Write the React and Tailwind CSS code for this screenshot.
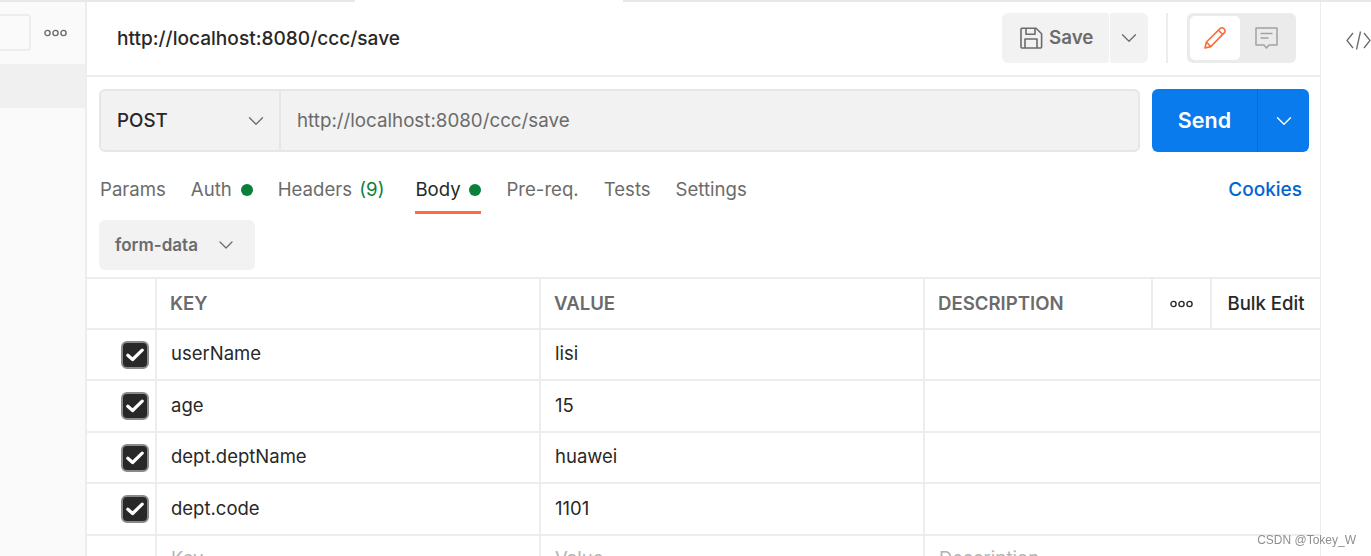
import { ChevronDown } from "lucide-react";

const rows = [
  ["userName", "lisi"],
  ["age", "15"],
  ["dept.deptName", "huawei"],
  ["dept.code", "1101"],
];

function Dots({ className }) {
  return (
    <svg width="23" height="8" viewBox="0 0 23 8" fill="none" stroke="currentColor" strokeWidth="1.4" className={className}>
      <circle cx="3.5" cy="4" r="2.6" />
      <circle cx="11.5" cy="4" r="2.6" />
      <circle cx="19.5" cy="4" r="2.6" />
    </svg>
  );
}

function GreenDot() {
  return <span className="inline-block w-3 h-3 rounded-full bg-[#0a7f3a]" />;
}

function Row({ children, check, className }) {
  return (
    <div className={`flex border-b-2 border-[#ededed] ${className}`}>
      <div className="w-[70px] shrink-0 border-r-2 border-[#ededed] flex items-center justify-end pr-[6px]">{check}</div>
      {children}
    </div>
  );
}

function Checkbox() {
  return (
    <span className="w-[28px] h-[28px] rounded-[6px] bg-[#282828] border-2 border-[#8a8a8a] flex items-center justify-center">
      <svg width="18" height="14" viewBox="0 0 18 14" fill="none" stroke="#fff" strokeWidth="3.2" strokeLinecap="round" strokeLinejoin="round">
        <path d="M1.8 7.2 L6.6 11.5 L16.2 2.2" />
      </svg>
    </span>
  );
}

export default function App() {
  return (
    <div className="w-[1371px] h-[556px] overflow-hidden bg-white font-['Inter',sans-serif] text-[#282828]">
      <div className="flex h-[2px]">
        <div className="w-[355px] bg-[#e8e8e8]" />
        <div className="w-[268px]" />
        <div className="flex-1 bg-[#e8e8e8]" />
      </div>
      <div className="flex h-[554px]">
        <aside className="w-[85px] shrink-0 bg-[#fafafa]">
          <div className="h-[62px] flex items-start pt-[12px]">
            <div className="w-[31px] h-[37px] border-2 border-l-0 border-[#ededed] rounded-r-[4px] bg-[#fafafa]" />
            <Dots className="ml-[13px] mt-[15px] text-[#6b6b6b]" />
          </div>
          <div className="h-[44px] bg-[#f0f0f0]" />
        </aside>

        <main className="w-[1236px] shrink-0 border-x-2 border-[#ededed] border-r-[1px]">
          <header className="h-[75px] border-b-2 border-[#ededed] flex items-center pl-[30px] pr-[24px]">
            <h1 className="text-[19.1px] font-medium -mt-[1px]">http://localhost:8080/ccc/save</h1>
            <div className="ml-auto flex items-center -mt-[2px]">
              <button className="w-[107px] h-[50px] bg-[#f2f2f2] rounded-l-[6px] rounded-r-[3px] flex items-center pl-[17px] gap-[6px] text-[18.75px] font-semibold text-[#6b6b6b]">
                <svg width="24" height="24" viewBox="0 0 24 24" fill="none" stroke="#6b6b6b" strokeWidth="1.6" strokeLinejoin="round">
                  <path d="M2 3.2 a1 1 0 0 1 1-1 H17 L22.6 7.8 V21 a1 1 0 0 1-1 1 H3 a1 1 0 0 1-1-1 Z" />
                  <path d="M7 2.2 V8.2 H16 V2.2" />
                  <path d="M6 22 V13 H18 V22" />
                </svg>
                <span className="pt-[1px]">Save</span>
              </button>
              <button className="w-[38px] h-[50px] ml-[1px] bg-[#f2f2f2] rounded-r-[6px] rounded-l-[3px] flex items-center justify-center">
                <ChevronDown size={26} strokeWidth={1.2} className="text-[#6b6b6b]" />
              </button>
              <div className="w-[2px] h-[50px] bg-[#ededed] ml-[18px] mr-[19px]" />
              <div className="w-[109px] h-[50px] bg-[#ebebeb] rounded-[6px] flex items-center pl-[3px]">
                <div className="w-[50px] h-[44px] bg-white rounded-[5px] flex items-center justify-center">
                  <svg width="24" height="24" viewBox="0 0 24 24" fill="none" stroke="#ff6c37" strokeWidth="1.6" strokeLinejoin="round">
                    <path d="M2 22 L3.4 16 L17.2 2.4 a2.4 2.4 0 0 1 3.4 0 l0.8 0.8 a2.4 2.4 0 0 1 0 3.4 L7.8 20.6 Z" />
                    <path d="M15.4 4.2 L19.6 8.4" />
                    <path d="M3.4 16 L7.8 20.6" />
                  </svg>
                </div>
                <div className="w-[53px] flex items-center justify-center pr-[2px]">
                  <svg width="24" height="24" viewBox="0 0 24 24" fill="none" stroke="#a3a3a3" strokeWidth="1.5" strokeLinejoin="round">
                    <path d="M2 2 H23 V19 H15 L12.5 22 L10 19 H2 Z" />
                    <path d="M6.5 7.5 H18.5 M6.5 12 H14.5" />
                  </svg>
                </div>
              </div>
            </div>
          </header>

          <div className="flex items-stretch h-[63px] mt-[12px] pl-[12px] pr-[11px]">
            <div className="flex flex-1 bg-[#f2f2f2] border-2 border-[#e6e6e6] rounded-[6px]">
              <div className="w-[180px] shrink-0 border-r-2 border-[#e6e6e6] flex items-center justify-between pl-[16px] pr-[10px] text-[18.75px] font-medium">
                <span className="pt-[1px]">POST</span>
                <ChevronDown size={26} strokeWidth={1.2} className="text-[#6b6b6b]" />
              </div>
              <div className="flex items-center pl-[16px] pt-[1px] text-[18.75px] text-[#6b6b6b]">http://localhost:8080/ccc/save</div>
            </div>
            <div className="ml-[12px] w-[157px] bg-[#097bed] rounded-[6px] flex text-white">
              <button className="w-[106px] text-[21.5px] font-semibold border-r border-[#0a6bcb]">Send</button>
              <div className="flex-1 flex items-center justify-center">
                <ChevronDown size={26} strokeWidth={1.3} />
              </div>
            </div>
          </div>

          <nav className="flex items-start h-[68px] pt-[24px] pl-[13px] pr-[18px] text-[18.6px] text-[#6b6b6b]">
            <span>Params</span>
            <span className="ml-[25px] flex items-center gap-[9px]">Auth <GreenDot /></span>
            <span className="ml-[25px]">Headers <span className="text-[#0a7f3a] ml-[2px]">(9)</span></span>
            <span className="ml-[31px] w-[66px] h-[38px] border-b-[3px] border-[#ff6c37] text-[#282828]">
              <span className="flex items-center justify-between">
                Body
                <GreenDot />
              </span>
            </span>
            <span className="ml-[25px]">Pre-req.</span>
            <span className="ml-[25px]">Tests</span>
            <span className="ml-[25px]">Settings</span>
            <span className="ml-auto text-[19px] font-medium text-[#0265d2]">Cookies</span>
          </nav>

          <div className="h-[57px] pl-[12px]">
            <div className="w-[156px] h-[50px] bg-[#f2f2f2] rounded-[6px] flex items-center pl-[16px] gap-[16px] text-[17px] font-semibold text-[#6b6b6b]">
              <span className="pt-[1px]">form-data</span>
              <ChevronDown size={24} strokeWidth={1.25} />
            </div>
          </div>

          <div className="border-t-2 border-[#ededed]">
            <Row className="h-[51px] text-[18.6px] font-semibold text-[#6b6b6b]">
              <div className="w-[384px] border-r-2 border-[#ededed] flex items-center pl-[13px] pt-[1px]">KEY</div>
              <div className="w-[384px] border-r-2 border-[#ededed] flex items-center pl-[13px] pt-[1px]">VALUE</div>
              <div className="w-[228px] border-r-2 border-[#ededed] flex items-center pl-[13px] pt-[1px]">DESCRIPTION</div>
              <div className="w-[59px] border-r-2 border-[#ededed] flex items-center justify-center">
                <Dots className="text-[#282828]" />
              </div>
              <div className="flex-1 flex items-center justify-center pt-[1px] font-medium text-[#282828]">Bulk Edit</div>
            </Row>
            {rows.map(([key, value], i) => (
              <Row key={key} check={<Checkbox />} className={i % 2 === 0 ? "h-[51px] text-[18.5px]" : "h-[52px] text-[18.5px]"}>
                <div className={`w-[384px] border-r-2 border-[#ededed] flex items-center pl-[14px] ${i % 2 === 0 ? "pb-[1px]" : ""}`}>{key}</div>
                <div className={`w-[384px] border-r-2 border-[#ededed] flex items-center pl-[14px] ${i % 2 === 0 ? "pb-[1px]" : ""}`}>{value}</div>
                <div className="flex-1" />
              </Row>
            ))}
            <Row className="h-[51px] text-[18.5px] text-[#b3b3b3]">
              <div className="w-[384px] border-r-2 border-[#ededed] pl-[14px] pt-[9px]">Key</div>
              <div className="w-[384px] border-r-2 border-[#ededed] pl-[14px] pt-[9px]">Value</div>
              <div className="flex-1 pl-[14px] pt-[9px]">Description</div>
            </Row>
          </div>
        </main>

        <aside className="flex-1 pl-[25px] pt-[29px]">
          <svg width="25" height="19" viewBox="0 0 25 19" fill="none" stroke="#6b6b6b" strokeWidth="1.3">
            <path d="M7 2 L1 9.5 L7 17" />
            <path d="M14.5 0.5 L10.5 18.5" />
            <path d="M18 2 L24 9.5 L18 17" />
          </svg>
        </aside>
      </div>
      <div className="fixed right-[15px] bottom-[7px] text-[12px] font-['Liberation_Sans',sans-serif] text-[#8f8f8f]">CSDN @Tokey_W</div>
    </div>
  );
}
